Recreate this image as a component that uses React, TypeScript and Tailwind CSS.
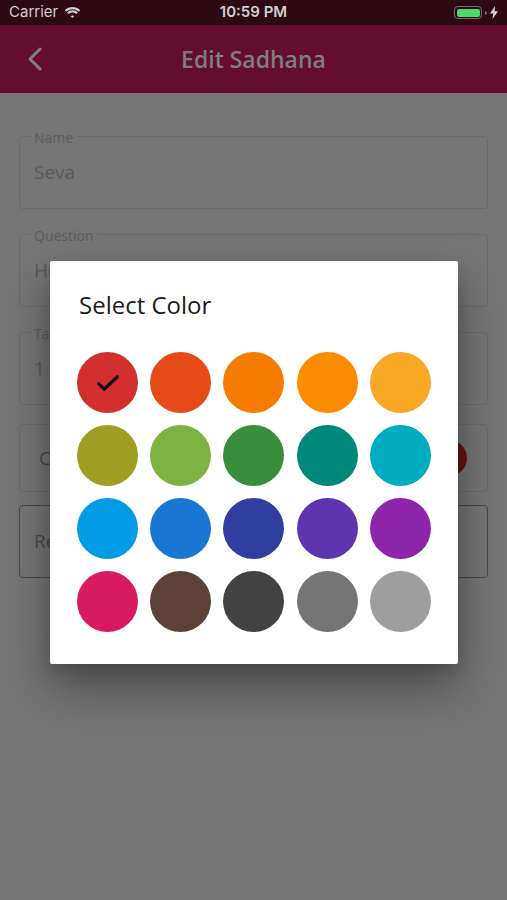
import React from 'react';

const COLORS = [
  '#d32f2f', '#e64a19', '#f57c00', '#fb8c00', '#f9a825',
  '#9e9d24', '#7cb342', '#388e3c', '#00897b', '#00acc1',
  '#039be5', '#1976d2', '#303f9f', '#5e35b1', '#8e24aa',
  '#d81b60', '#5d4037', '#424242', '#757575', '#9e9e9e',
];

const StatusBar = () => (
  <div className="h-[25px] bg-[#2d0914] flex items-center justify-between px-[9px] text-[#cfcfcf] text-[15px] font-['Inter',sans-serif]">
    <div className="flex items-center gap-[6px] w-[120px]">
      <span>Carrier</span>
      <svg width="17" height="12" viewBox="0 0 17 12" fill="#cfcfcf">
        <path d="M8.5 2.2c2.4 0 4.6.9 6.3 2.5l1.4-1.5C14.1 1.2 11.4.1 8.5.1S2.9 1.2.8 3.2l1.4 1.5C3.9 3.1 6.1 2.2 8.5 2.2z" />
        <path d="M8.5 5.4c1.5 0 2.9.6 4 1.6l1.4-1.5C12.5 4.1 10.6 3.3 8.5 3.3S4.5 4.1 3.1 5.5L4.5 7c1.1-1 2.5-1.6 4-1.6z" />
        <path d="M8.5 8.5c.7 0 1.3.3 1.8.7L8.5 11.1 6.7 9.2c.5-.4 1.1-.7 1.8-.7z" />
      </svg>
    </div>
    <span className="font-semibold">10:59 PM</span>
    <div className="flex items-center justify-end gap-[3px] w-[120px]">
      <div className="w-[28px] h-[13px] rounded-[4px] border border-[#7a6a6e] p-[1.5px]">
        <div className="w-full h-full rounded-[2px] bg-[#4cd964]" />
      </div>
      <div className="w-[2px] h-[4px] bg-[#7a6a6e] rounded-r-sm" />
      <svg width="8" height="13" viewBox="0 0 8 13" fill="#cfcfcf">
        <path d="M5 0L0 7.5h3.2L2.5 13 8 5.2H4.7z" />
      </svg>
    </div>
  </div>
);

const Field = ({ label, value }: { label: string; value: string }) => (
  <div className="relative h-[73px] rounded-[4px] border border-[#6a6a6a] px-[14px] pt-[21px]">
    <span className="absolute -top-[10px] left-[10px] px-[4px] bg-[#757575] text-[14px] text-[#5c5c5c]">
      {label}
    </span>
    <span className="text-[19px] text-[#595959]">{value}</span>
  </div>
);

export default function App() {
  return (
    <div className="relative w-[507px] h-[900px] bg-[#757575] overflow-hidden font-['Open_Sans',sans-serif]">
      <StatusBar />
      <header className="h-[68px] bg-[#640d2f] flex items-center relative">
        <svg className="absolute left-[26px]" width="18" height="26" viewBox="0 0 18 26" fill="none">
          <path d="M14 3L4 13l10 10" stroke="#7f7f7f" strokeWidth="3" strokeLinecap="round" strokeLinejoin="round" />
        </svg>
        <h1 className="w-full text-center text-[23px] text-[#7d7d7d] font-semibold">Edit Sadhana</h1>
      </header>

      <main className="flex flex-col gap-[25px] px-[19px] pt-[43px]">
        <Field label="Name" value="Seva" />
        <Field label="Question" value="How many hours?" />
        <Field label="Target" value="1" />
        <div className="h-[68px] -mt-[6px] rounded-[4px] border border-[#6a6a6a] flex items-center justify-between px-[19px]">
          <span className="text-[19px] text-[#4a4a4a]">Color</span>
          <div className="w-[36px] h-[36px] rounded-full bg-[#6a1212] mr-[1px]" />
        </div>
        <div className="h-[73px] -mt-[12px] rounded-[4px] border border-[#4a4a4a] flex items-center px-[14px]">
          <span className="text-[19px] text-[#4a4a4a]">Reminder</span>
        </div>
      </main>

      <div className="absolute left-[50px] top-[261px] w-[408px] h-[403px] bg-white rounded-[2px] shadow-[0_24px_48px_rgba(0,0,0,0.35),0_8px_16px_rgba(0,0,0,0.15)] px-[27px] pt-[27px]">
        <h2 className="text-[24px] leading-[33px] text-[#1c1c1c] font-medium ml-[2px]">Select Color</h2>
        <div className="grid grid-cols-5 gap-[12px] mt-[31px]">
          {COLORS.map((c, i) => (
            <div key={c + i} className="w-[61px] h-[61px] rounded-full flex items-center justify-center" style={{ backgroundColor: c }}>
              {i === 0 && (
                <svg width="30" height="30" viewBox="0 0 24 24" fill="none">
                  <path d="M4.5 12.5l4.5 4.5L19.5 7" stroke="#111" strokeWidth="2.5" strokeLinecap="round" strokeLinejoin="round" />
                </svg>
              )}
            </div>
          ))}
        </div>
      </div>
    </div>
  );
}
